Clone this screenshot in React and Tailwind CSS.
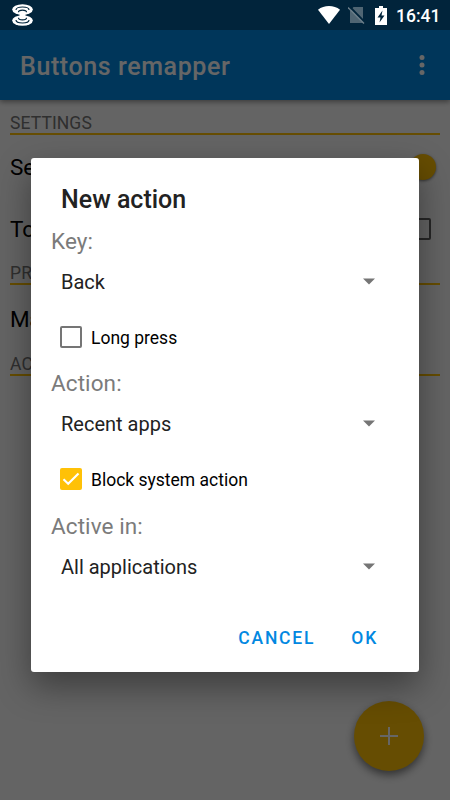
import { useState } from "react";

const spinnerText = "text-[20px] leading-6 text-[#222]";

// Status bar, stays above the dim layer
const StatusBar = () => (
  <div className="relative z-20 h-[30px] bg-[#01243b] flex items-center pl-[12px] pr-[10px] text-white">
    <svg width="21" height="22" viewBox="0 0 21 22">
      <ellipse cx="10.5" cy="5.5" rx="10.3" ry="5.3" fill="white" />
      <ellipse cx="10.5" cy="16.5" rx="10.3" ry="5.3" fill="white" />
      <path d="M7.5 9h6v4h-6z" fill="white" />
      <g fill="none" stroke="#01243b" strokeWidth="1.2">
        <path d="M4 6C4 4 7 3 10.5 3S17 4 17 6" />
        <path d="M6.5 8.3C6.5 6.800 8.300 6.200 10.5 6.200S14.500 6.800 14.500 8.300" />
        <path d="M4 16C4 18 7 19 10.5 19S17 18 17 16" />
        <path d="M6.500 13.700C6.500 15.200 8.300 15.800 10.500 15.800S14.500 15.200 14.500 13.700" />
      </g>
    </svg>
    <div className="ml-auto flex items-center">
      <svg width="22" height="18" viewBox="0 0 22 18" fill="currentColor">
        <path d="M0 3.7C3 1.200 7 0 11 0s8 1.200 11 3.700L11 18z" />
      </svg>
      <svg className="ml-[8px]" width="17" height="18" viewBox="0 0 17 18">
        <path d="M5.5 1H15v16H2V5z" fill="#4f6573" />
        <path d="M1.500 .5L17 16.500" stroke="#01243b" strokeWidth="2" />
        <path d="M0 1.500L16 17.500" stroke="#6b7d89" strokeWidth="1.500" />
      </svg>
      <svg className="ml-[10px]" width="12" height="19" viewBox="0 0 12 19">
        <path d="M4 0h4v2h4v17H0V2h4z" fill="white" />
        <path d="M7.5 4.500L2.500 11.500h3L4.500 16.500L9.500 9.500h-3z" fill="#01243b" />
      </svg>
      <span className="ml-[9px] w-[44px] pt-[2px] text-[17.5px] font-medium leading-[30px]">16:41</span>
    </div>
  </div>
);

const SectionTitle = ({ children }) => (
  <div className="h-[23px] border-b-2 border-[#ffc107] text-[17.5px] leading-[22px] tracking-[0.1px] text-[#757575]">
    {children}
  </div>
);

const Spinner = ({ label, value }) => (
  <div>
    <div className="h-[28px] text-[22.5px] leading-[28px] tracking-[0.1px] text-[#7b7b7b]">{label}</div>
    <button className="mt-[15px] flex w-full h-6 items-center justify-between pl-[10px] pr-[24px]">
      <span className={spinnerText}>{value}</span>
      <svg className="-mt-[2px]" width="12" height="7" viewBox="0 0 12 7" fill="#757575">
        <path d="M0 .5h12L6 6.5z" />
      </svg>
    </button>
  </div>
);

const CheckBox = ({ checked, onChange, children }) => (
  <button
    onClick={() => onChange(!checked)}
    className="mt-[31px] ml-[9px] flex h-[24px] items-center text-[17.5px] text-black"
  >
    {checked ? (
      <span className="flex size-[22px] items-center justify-center rounded-[2px] bg-[#ffc107]">
        <svg width="18" height="14" viewBox="0 0 18 14" fill="none" stroke="white" strokeWidth="2.2">
          <path d="M1.5 7.2l4.700 4.500L16.500 1.500" />
        </svg>
      </span>
    ) : (
      <span className="size-[22px] rounded-[2px] border-2 border-[#757575]" />
    )}
    <span className="ml-[9px] pt-[2px]">{children}</span>
  </button>
);

export default function App() {
  const [longPress, setLongPress] = useState(false);
  const [block, setBlock] = useState(true);

  return (
    <div className="relative flex h-[800px] w-[450px] flex-col overflow-hidden bg-[#fafafa] font-['Roboto',sans-serif]">
      <StatusBar />
      <header className="flex h-[70px] shrink-0 items-center bg-[#0288e1] pl-[20px] pr-[25px] pt-[3px] text-white shadow-[0_2px_5px_rgba(0,0,0,0.4)]">
        <h1 className="text-[25px] font-medium tracking-[0.6px]">Buttons remapper</h1>
        <svg className="ml-auto -mt-[3px]" width="6" height="20" viewBox="0 0 6 20" fill="currentColor">
          <circle cx="3" cy="2.5" r="2.5" />
          <circle cx="3" cy="10" r="2.5" />
          <circle cx="3" cy="17.5" r="2.5" />
        </svg>
      </header>

      <main className="flex flex-1 flex-col px-[10px] pt-[12px]">
        <SectionTitle>SETTINGS</SectionTitle>
        <div className="flex h-[64px] items-center justify-between pr-[4px] text-[22.5px]">
          <span className="pt-[1px]">Se</span>
          <span className="size-[26px] rounded-full bg-[#ffc107] shadow-[0_1px_3px_rgba(0,0,0,0.5)]" />
        </div>
        <div className="flex h-[60px] items-center justify-between pr-[9px] text-[22.5px]">
          <span className="pt-[2px]">To</span>
          <span className="size-[22px] rounded-[2px] border-2 border-[#606060]" />
        </div>
        <div className="mt-[3px]">
          <SectionTitle>PR</SectionTitle>
        </div>
        <div className="flex h-[68px] items-center pt-[2px] text-[22.5px] tracking-[-0.4px]">Ma</div>
        <SectionTitle>AC</SectionTitle>
        <button className="mt-auto mb-[29px] mr-[16px] flex size-[70px] items-center justify-center self-end rounded-full bg-[#ffc107] shadow-[0_4px_8px_rgba(0,0,0,0.5)]">
          <svg width="18" height="18" viewBox="0 0 18 18" stroke="white" strokeWidth="2">
            <path d="M9 0v18M0 9h18" />
          </svg>
        </button>
      </main>

      {/* Dialog */}
      <div className="absolute inset-0 z-10 bg-black/60 px-[31px] pt-[158px]">
        <div className="flex h-[514px] w-[388px] flex-col rounded-[3px] bg-white pl-[20px] pr-[20px] shadow-[0_14px_34px_rgba(0,0,0,0.4)]">
          <h2 className="mt-[26px] ml-[10px] text-[25px] font-medium leading-[32px] text-[#222]">New action</h2>
          <div className="mt-[11px]">
            <Spinner label="Key:" value="Back" />
            <CheckBox checked={longPress} onChange={setLongPress}>Long press</CheckBox>
          </div>
          <div className="mt-[20px]">
            <Spinner label="Action:" value="Recent apps" />
            <CheckBox checked={block} onChange={setBlock}>Block system action</CheckBox>
          </div>
          <div className="mt-[21px]">
            <Spinner label="Active in:" value="All applications" />
          </div>
          <div className="mt-auto mb-[22px] flex justify-end gap-[36px] pr-[21px] text-[17.5px] font-medium leading-6 tracking-[1.8px] text-[#0288e1]">
            <button>CANCEL</button>
            <button>OK</button>
          </div>
        </div>
      </div>
    </div>
  );
}
